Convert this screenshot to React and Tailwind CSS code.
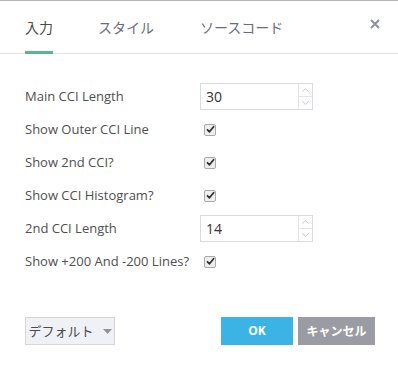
function Check() {
  return (
    <span className="flex h-[12px] w-[12px] items-center justify-center rounded-[2px] border border-[#a9a9a9] bg-[#eeeeee]">
      <svg width="9" height="9" viewBox="0 0 9 9" fill="none">
        <path d="M1.5 4.8L3.5 6.8L7.6 1.8" stroke="#333" strokeWidth="1.8" strokeLinecap="round" strokeLinejoin="round" />
      </svg>
    </span>
  );
}

function NumberInput({ value }) {
  return (
    <div className="flex h-[27px] w-[113px] border border-[#dadbdf] bg-white">
      <div className="flex flex-1 items-center pl-[5px] text-[14px] text-[#333]">{value}</div>
      <div className="flex w-[14px] flex-col border-l border-[#e4e5e8]">
        <div className="flex flex-1 items-center justify-center border-b border-[#e4e5e8]">
          <svg width="7" height="4" viewBox="0 0 7 4" fill="none">
            <path d="M0.5 3.5L3.5 0.8L6.5 3.5" stroke="#b8bfc8" strokeWidth="0.9" />
          </svg>
        </div>
        <div className="flex flex-1 items-center justify-center">
          <svg width="7" height="4" viewBox="0 0 7 4" fill="none">
            <path d="M0.5 0.5L3.5 3.2L6.5 0.5" stroke="#b8bfc8" strokeWidth="0.9" />
          </svg>
        </div>
      </div>
    </div>
  );
}

const rows = [
  { label: "Main CCI Length", input: "30" },
  { label: "Show Outer CCI Line", check: true },
  { label: "Show 2nd CCI?", check: true },
  { label: "Show CCI Histogram?", check: true },
  { label: "2nd CCI Length", input: "14" },
  { label: "Show +200 And -200 Lines?", check: true },
];

export default function App() {
  const jp = { fontFamily: '"Noto Sans CJK JP", sans-serif' };
  return (
    <div
      className="flex h-[368px] w-[398px] flex-col border-t border-[#b5b5b5] bg-white"
      style={{ fontFamily: '"Open Sans", "Noto Sans CJK JP", sans-serif' }}
    >
      {/* tabs */}
      <div className="flex h-[53px] items-stretch border-b border-[#e0e3eb] px-[25px]">
        <div className="relative flex items-center text-[14px] text-[#4a4a4a]" style={jp}>
          入力
          <span className="absolute bottom-[-1px] left-0 right-0 h-[3px] bg-[#53b987]" />
        </div>
        <div className="ml-[45px] flex items-center text-[14px] text-[#6a6d78]" style={jp}>
          スタイル
        </div>
        <div className="ml-[46px] flex items-center text-[14px] text-[#6a6d78]" style={jp}>
          ソースコード
        </div>
        <div className="ml-auto mr-[-7px] flex items-center pb-[6px]">
          <svg width="10" height="10" viewBox="0 0 10 10">
            <path d="M1 1L9 9M9 1L1 9" stroke="#8e9199" strokeWidth="2" />
          </svg>
        </div>
      </div>

      {/* body */}
      <div className="flex flex-col px-[25px] pt-[26px]">
        {rows.map((r) => (
          <div key={r.label} className="flex h-[33px] items-center">
            <div className="w-[175px] shrink-0 text-[13px] text-[#4f4f4f]">{r.label}</div>
            {r.input ? (
              <NumberInput value={r.input} />
            ) : (
              <div className="pl-[4px]">
                <Check />
              </div>
            )}
          </div>
        ))}
      </div>

      {/* footer */}
      <div className="mt-auto mb-[23px] flex items-center pl-[25px] pr-[23px]">
        <button
          className="flex h-[28px] w-[90px] items-center justify-center gap-[9px] border border-[#d4d6db] bg-[#f0f1f5] text-[13px] text-[#4a4a4a]"
          style={jp}
        >
          デフォルト
          <svg width="9" height="5" viewBox="0 0 9 5">
            <path d="M0 0H9L4.5 5Z" fill="#8f939b" />
          </svg>
        </button>
        <button className="ml-auto h-[28px] w-[72px] bg-[#3bb3e4] text-[12px] font-bold text-white">OK</button>
        <button
          className="ml-[5px] h-[28px] w-[77px] bg-[#9b9ca3] text-[12px] font-bold text-white"
          style={jp}
        >
          キャンセル
        </button>
      </div>
    </div>
  );
}
